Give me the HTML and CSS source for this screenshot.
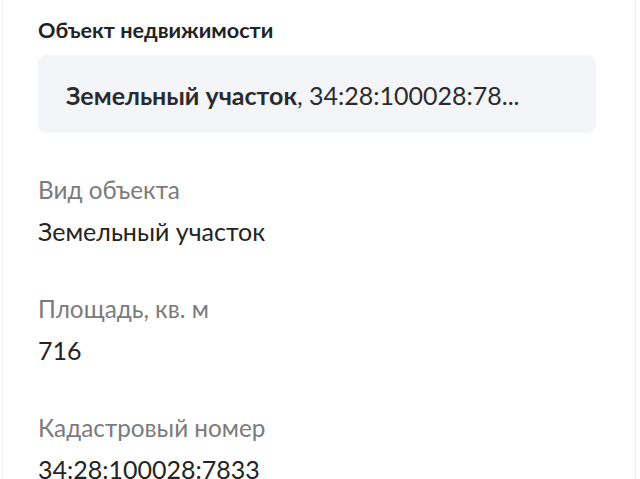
FILE: index.html
```html
<!DOCTYPE html>
<html lang="ru">
<head>
<meta charset="utf-8">
<link rel="stylesheet" href="styles.css">
</head>
<body>
<div class="screen">
  <section class="panel">
    <h2 class="panel-title">Объект недвижимости</h2>
    <div class="object-card">
      <span class="object-line"><b>Земельный участок</b>, 34:28:100028:78...</span>
    </div>
    <dl class="props">
      <div class="prop">
        <dt>Вид объекта</dt>
        <dd>Земельный участок</dd>
      </div>
      <div class="prop">
        <dt>Площадь, кв. м</dt>
        <dd>716</dd>
      </div>
      <div class="prop">
        <dt>Кадастровый номер</dt>
        <dd>34:28:100028:7833</dd>
      </div>
    </dl>
  </section>
</div>
</body>
</html>
```

FILE: styles.css
```css
html, body {
  margin: 0;
  padding: 0;
  background: #ffffff;
}

body {
  font-family: Lato, "Noto Sans", sans-serif;
  color: #242424;
  height: 479px;
  overflow: hidden;
}

.screen {
  height: 479px;
  margin: 0 4px 0 2px;
  border-left: 1px solid #f3f3f6;
  border-right: 1px solid #ececf2;
}

.panel {
  padding: 17px 39px 0 35px;
}

.panel-title {
  margin: 0;
  font-size: 21.6px;
  font-weight: 700;
  line-height: 26px;
  color: #222326;
}

.object-card {
  margin-top: 12px;
  height: 78px;
  box-sizing: border-box;
  background: #f4f5f8;
  border-radius: 8px;
  padding: 2px 28px 0;
  display: flex;
  align-items: center;
}

.object-line {
  font-size: 25px;
  line-height: 30px;
  color: #2a2b2e;
  white-space: nowrap;
}

.object-line b {
  font-weight: 700;
}

.props {
  margin: 0;
  padding-top: 42px;
}

.prop {
  margin-bottom: 48px;
}

.prop dt {
  font-size: 24.3px;
  line-height: 30px;
  color: #7b7b7e;
}

.prop dd {
  margin: 0;
  margin-top: 11px;
  font-size: 25px;
  line-height: 30px;
  color: #242424;
}
```
